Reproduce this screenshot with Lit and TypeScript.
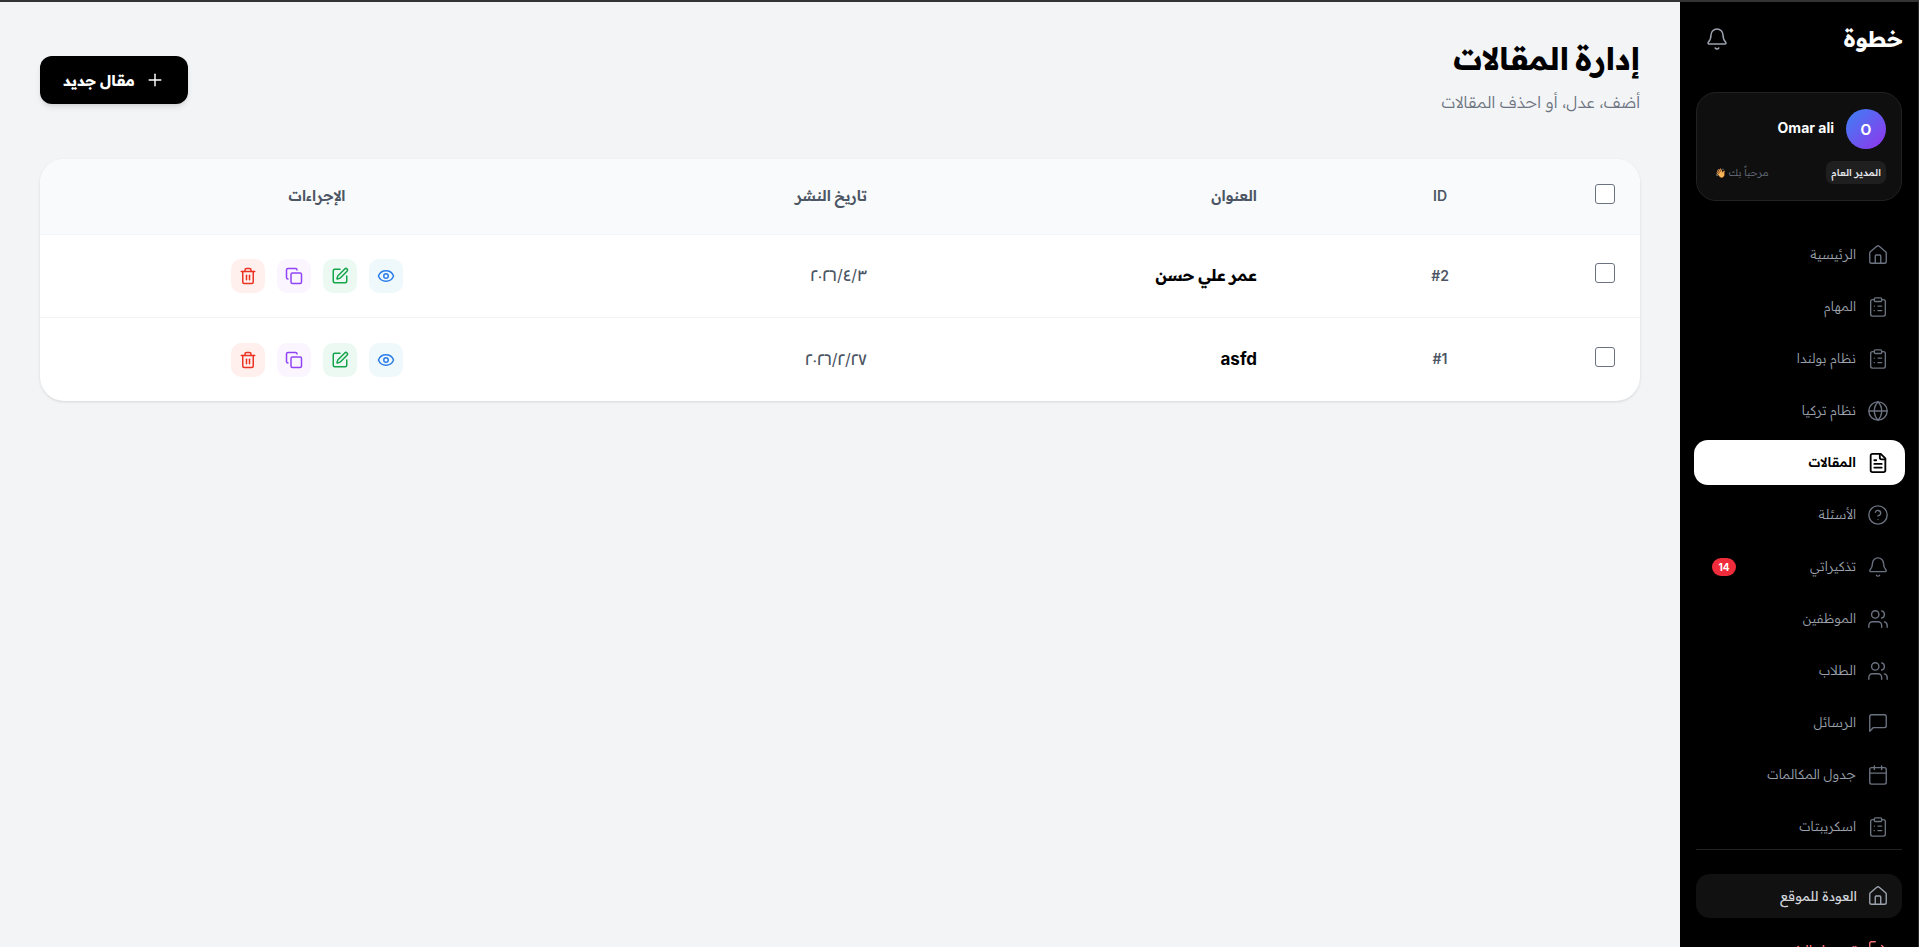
import { LitElement, html, css, svg } from "lit";
import { customElement } from "lit/decorators.js";

const I: Record<string, any> = {
  home: svg`<path d="M15 21v-8a1 1 0 0 0-1-1h-4a1 1 0 0 0-1 1v8"/><path d="M3 10a2 2 0 0 1 .709-1.528l7-5.999a2 2 0 0 1 2.582 0l7 5.999A2 2 0 0 1 21 10v9a2 2 0 0 1-2 2H5a2 2 0 0 1-2-2z"/>`,
  clip: svg`<rect width="8" height="4" x="8" y="2" rx="1" ry="1"/><path d="M16 4h2a2 2 0 0 1 2 2v14a2 2 0 0 1-2 2H6a2 2 0 0 1-2-2V6a2 2 0 0 1 2-2h2"/><path d="M12 11h4"/><path d="M12 16h4"/><path d="M8 11h.01"/><path d="M8 16h.01"/>`,
  globe: svg`<circle cx="12" cy="12" r="10"/><path d="M12 2a14.5 14.5 0 0 0 0 20 14.5 14.5 0 0 0 0-20"/><path d="M2 12h20"/>`,
  file: svg`<path d="M15 2H6a2 2 0 0 0-2 2v16a2 2 0 0 0 2 2h12a2 2 0 0 0 2-2V7Z"/><path d="M14 2v4a2 2 0 0 0 2 2h4"/><path d="M10 9H8"/><path d="M16 13H8"/><path d="M16 17H8"/>`,
  help: svg`<circle cx="12" cy="12" r="10"/><path d="M9.09 9a3 3 0 0 1 5.83 1c0 2-3 3-3 3"/><path d="M12 17h.01"/>`,
  bell: svg`<path d="M10.268 21a2 2 0 0 0 3.464 0"/><path d="M3.262 15.326A1 1 0 0 0 4 17h16a1 1 0 0 0 .74-1.673C19.41 13.956 18 12.499 18 8A6 6 0 0 0 6 8c0 4.499-1.411 5.956-2.738 7.326"/>`,
  users: svg`<path d="M16 21v-2a4 4 0 0 0-4-4H6a4 4 0 0 0-4 4v2"/><circle cx="9" cy="7" r="4"/><path d="M22 21v-2a4 4 0 0 0-3-3.87"/><path d="M16 3.13a4 4 0 0 1 0 7.75"/>`,
  msg: svg`<path d="M21 15a2 2 0 0 1-2 2H7l-4 4V5a2 2 0 0 1 2-2h14a2 2 0 0 1 2 2z"/>`,
  cal: svg`<path d="M8 2v4"/><path d="M16 2v4"/><rect width="18" height="18" x="3" y="4" rx="2"/><path d="M3 10h18"/>`,
  logout: svg`<path d="M9 21H5a2 2 0 0 1-2-2V5a2 2 0 0 1 2-2h4"/><path d="m16 17 5-5-5-5"/><path d="M21 12H9"/>`,
  plus: svg`<path d="M5 12h14"/><path d="M12 5v14"/>`,
  eye: svg`<path d="M2.062 12.348a1 1 0 0 1 0-.696 10.75 10.75 0 0 1 19.876 0 1 1 0 0 1 0 .696 10.75 10.75 0 0 1-19.876 0"/><circle cx="12" cy="12" r="3"/>`,
  pen: svg`<path d="M12 3H5a2 2 0 0 0-2 2v14a2 2 0 0 0 2 2h14a2 2 0 0 0 2-2v-7"/><path d="M18.375 2.625a1 1 0 0 1 3 3l-9.013 9.014a2 2 0 0 1-.853.505l-2.873.84a.5.5 0 0 1-.62-.62l.84-2.873a2 2 0 0 1 .506-.852z"/>`,
  copy: svg`<rect width="14" height="14" x="8" y="8" rx="2" ry="2"/><path d="M4 16c-1.1 0-2-.9-2-2V4c0-1.1.9-2 2-2h10c1.1 0 2 .9 2 2"/>`,
  trash: svg`<path d="M3 6h18"/><path d="M19 6v14c0 1-1 2-2 2H7c-1 0-2-1-2-2V6"/><path d="M8 6V4c0-1 1-2 2-2h4c1 0 2 1 2 2v2"/><path d="M10 11v6"/><path d="M14 11v6"/>`,
};

const icon = (n: string, cls = "") =>
  html`<svg class="ic ${cls}" viewBox="0 0 24 24" fill="none" stroke="currentColor" stroke-linecap="round" stroke-linejoin="round">${I[n]}</svg>`;

const NAV = [
  ["home", "الرئيسية"],
  ["clip", "المهام"],
  ["clip", "نظام بولندا"],
  ["globe", "نظام تركيا"],
  ["file", "المقالات", "active"],
  ["help", "الأسئلة"],
  ["bell", "تذكيراتي", "badge"],
  ["users", "الموظفين"],
  ["users", "الطلاب"],
  ["msg", "الرسائل"],
  ["cal", "جدول المكالمات"],
  ["clip", "اسكريبتات"],
];

const ROWS = [
  ["#2", "عمر علي حسن", "٢٠٢٦/٤/٣"],
  ["#1", "asfd", "٢٠٢٦/٢/٢٧"],
];

@customElement("app-root")
export class AppRoot extends LitElement {
  static styles = css`
    :host {
      display: block;
      height: 947px;
      overflow: hidden;
      font-family: Inter, "Readex Pro", sans-serif;
      background: #f3f4f6;
      color: #000;
    }
    .topline { height: 2px; background: #333; }
    .page { display: flex; direction: rtl; height: 945px; }
    .ic { width: 22px; height: 22px; stroke-width: 1.5; flex: none; display: block; }

    aside {
      width: 238px;
      flex: none;
      background: #000;
      border-inline-start: 1px solid #2a2a2a;
      overflow: hidden;
      box-sizing: content-box;
    }
    .brand {
      display: flex;
      justify-content: space-between;
      align-items: center;
      padding: 21px 15px 0 25px;
      height: 32px;
    }
    .logo { color: #fff; font-size: 22px; font-weight: 900; line-height: 32px; }
    .topbell { color: #9ca3af; }
    .topbell .ic { width: 24px; height: 24px; }
    .ucard {
      margin: 37px 16px 0 16px;
      height: 109px;
      box-sizing: border-box;
      border: 1px solid #222;
      border-radius: 20px;
      background: #0f0f0f;
      padding: 16px 15px 16px 16px;
    }
    .urow { display: flex; align-items: center; gap: 12px; }
    .avatar {
      width: 40px; height: 40px; border-radius: 50%;
      background: linear-gradient(135deg, #3b82f6, #9333ea);
      color: #fff; font-weight: 700; font-size: 14px;
      display: flex; align-items: center; justify-content: center;
    }
    .uname { color: #fff; font-weight: 700; font-size: 14px; padding-bottom: 3px; }
    .umeta { display: flex; justify-content: space-between; align-items: center; margin-top: 12px; }
    .role {
      background: #1f1f1f; color: #e5e7eb; font-size: 10px; border-radius: 7px;
      height: 23px; padding: 0 5px; display: flex; align-items: center; font-weight: 500;
    }
    .hi { color: #6b7280; font-size: 10px; padding-inline-end: 2px; font-weight: 300; }
    .wave { font-size: 9px; filter: hue-rotate(-22deg) saturate(.85); }
    nav { display: flex; flex-direction: column; gap: 7px; margin: 31px 13px 0 14px; }
    .item {
      height: 45px; display: flex; align-items: center; gap: 11px;
      padding: 0 16px 0 18px; border-radius: 14px; color: #9ca3af; font-size: 13px; font-weight: 300;
    }
    .item .label { padding-bottom: 2px; }
    .item .ic { color: #6b7280; }
    .item.active { background: #fff; color: #000; font-weight: 600; }
    .item.active .ic { color: #000; stroke-width: 2; }
    .count {
      margin-inline-start: auto;
      background: #ef2c3c; color: #fff; font-size: 10px; font-weight: 700;
      height: 18px; width: 24px; border-radius: 9px;
      display: flex; align-items: center; justify-content: center;
    }
    .rule { height: 1px; background: #222; margin: 0 16px; }
    .back {
      margin: 24px 16px 0 16px; height: 44px; border-radius: 14px; background: #111;
      display: flex; align-items: center; gap: 10px; padding: 0 13px;
      color: #d1d5db; font-size: 13px; font-weight: 400;
    }
    .back .ic { color: #9ca3af; }
    .out {
      margin: 10px 16px 0 16px; height: 44px;
      display: flex; align-items: center; gap: 10px; padding: 0 13px;
      color: #f87171; font-size: 13px; font-weight: 400;
    }

    main { flex: 1; padding: 0 40px; min-width: 0; }
    header { display: flex; justify-content: space-between; align-items: flex-start; padding-top: 35px; height: 122px; box-sizing: content-box; }
    h1 { margin: 0; font-size: 31px; font-weight: 900; line-height: 44px; }
    .sub { margin: 9px 0 0; font-size: 16px; font-weight: 300; color: #6b7280; line-height: 24px; }
    .new {
      margin-top: 19px; height: 48px; width: 148px; border: 0; border-radius: 12px;
      background: #000; color: #fff; font: inherit; font-size: 15px; font-weight: 700;
      display: flex; align-items: center; justify-content: center; gap: 10px;
      box-shadow: 0 4px 6px -1px rgba(0,0,0,.1), 0 2px 4px -2px rgba(0,0,0,.1);
    }
    .new .ic { width: 20px; height: 20px; stroke-width: 1.75; }
    .card {
      background: #fff; border-radius: 24px; overflow: hidden;
      box-shadow: 0 1px 3px rgba(0,0,0,.1), 0 1px 2px -1px rgba(0,0,0,.1);
    }
    .tr {
      display: grid; grid-template-columns: 168px 64px 517px 297px 1fr;
      align-items: center; border-bottom: 1px solid #f3f4f6; height: 82px;
    }
    .tr:last-child { border-bottom: 0; height: 83px; }
    .tr.head { background: #f9fafb; height: 75px; color: #4b5563; font-weight: 600; font-size: 14.5px; }
    .head .c-id, .head .c-title, .head .c-date, .head .c-act { padding-bottom: 2px; }
    .cb {
      width: 20px; height: 20px; box-sizing: border-box; border: 1px solid #6b7280; border-radius: 3px;
      background: #fff; margin-inline-start: 25px; appearance: none; display: block; margin-block: 0 6px;
    }
    .c-id { text-align: center; }
    .head .c-id { font-size: 14px; }
    .body-id { color: #4b5563; font-size: 14px; font-weight: 600; padding-bottom: 2px; }
    .c-title { padding-inline-start: 151px; }
    .body-title { font-size: 16px; font-weight: 700; color: #000; padding-bottom: 2px; }
    .body-title.latin { font-size: 17px; }
    .c-date { padding-inline-start: 24px; }
    .body-date { font-size: 16px; font-weight: 400; color: #4b5563; padding-bottom: 2px; }
    .c-act { text-align: center; }
    .acts { display: flex; gap: 12px; justify-content: center; }
    .a {
      width: 34px; height: 34px; border-radius: 10px; display: flex; align-items: center; justify-content: center;
    }
    .a .ic { width: 18px; height: 18px; stroke-width: 2; }
    .a.eye { background: #eff9fb; color: #2b7de9; }
    .a.pen { background: #ecf9f3; color: #16a34a; }
    .a.copy { background: #faf5ff; color: #9044f5; }
    .a.trash { background: #fff0ee; color: #ea3323; }
  `;

  render() {
    return html`
      <div class="topline"></div>
      <div class="page">
        <aside>
          <div class="brand">
            <span class="logo">خطوة</span>
            <span class="topbell">${icon("bell")}</span>
          </div>
          <div class="ucard">
            <div class="urow"><div class="avatar">O</div><div class="uname">Omar ali</div></div>
            <div class="umeta"><span class="role">المدير العام</span><span class="hi">مرحباً بك <span class="wave">👋</span></span></div>
          </div>
          <nav>
            ${NAV.map(
              ([ic, t, f]) => html`<div class="item ${f === "active" ? "active" : ""}">
                ${icon(ic)}<span class="label">${t}</span>
                ${f === "badge" ? html`<span class="count">14</span>` : ""}
              </div>`
            )}
          </nav>
          <div class="rule"></div>
          <div class="back">${icon("home")}<span>العودة للموقع</span></div>
          <div class="out">${icon("logout")}<span>تسجيل الخروج</span></div>
        </aside>
        <main>
          <header>
            <div>
              <h1>إدارة المقالات</h1>
              <p class="sub">أضف، عدل، أو احذف المقالات</p>
            </div>
            <button class="new">${icon("plus")}<span>مقال جديد</span></button>
          </header>
          <section class="card">
            <div class="tr head">
              <div><input class="cb" type="checkbox" /></div>
              <div class="c-id">ID</div>
              <div class="c-title">العنوان</div>
              <div class="c-date">تاريخ النشر</div>
              <div class="c-act">الإجراءات</div>
            </div>
            ${ROWS.map(
              ([id, t, d]) => html`<div class="tr">
                <div><input class="cb" type="checkbox" /></div>
                <div class="c-id body-id">${id}</div>
                <div class="c-title body-title ${/^[a-z]/i.test(t) ? "latin" : ""}">${t}</div>
                <div class="c-date body-date">${d}</div>
                <div class="c-act">
                  <div class="acts">
                    <span class="a eye">${icon("eye")}</span>
                    <span class="a pen">${icon("pen")}</span>
                    <span class="a copy">${icon("copy")}</span>
                    <span class="a trash">${icon("trash")}</span>
                  </div>
                </div>
              </div>`
            )}
          </section>
        </main>
      </div>
    `;
  }
}
